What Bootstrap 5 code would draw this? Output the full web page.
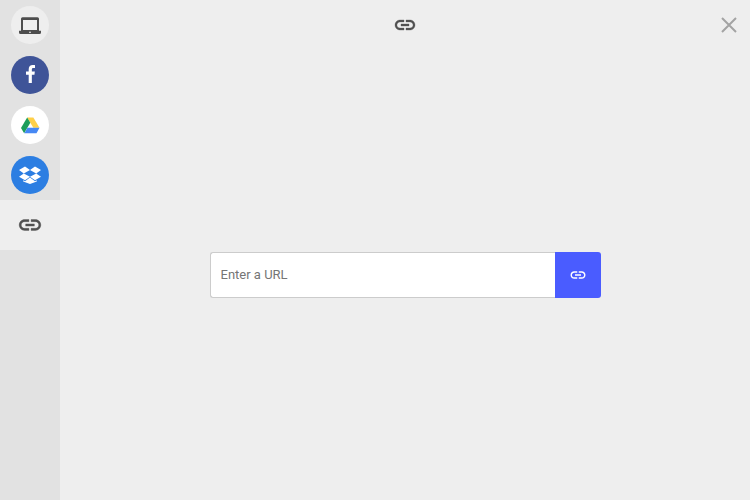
<!DOCTYPE html>
<html lang="en">
<head>
<meta charset="utf-8">
<title>Enter a URL</title>
<link href="https://cdn.jsdelivr.net/npm/bootstrap@5.3.0/dist/css/bootstrap.min.css" rel="stylesheet">
<style>
html,body{height:100%;margin:0;overflow:hidden}
body{background:#eee;font-family:Roboto,"Liberation Sans",sans-serif}
.shell{width:750px;height:500px}
.rail{width:60px;background:#e2e2e2;flex:none}
.tab{height:50px}
.tab-on{background:#eee}
.disc{width:38px;height:38px;border-radius:50%}
.disc-local{background:#eee}
.disc-fb{background:#3f5498}
.disc-drive{background:#fff}
.disc-box{background:#2c7ee2}
.main{min-width:0}
.topbar{height:50px}
.closer{right:11px;top:15px;width:20px;height:20px;padding:0;background:none;border:0}
.urlform{width:391px;height:46px}
.urlinput{height:46px;border:1px solid #ccc;border-right:0;border-radius:3px 0 0 3px;font-size:13px;padding:0 10px 2px;color:#444;box-shadow:none}
.urlinput::placeholder{color:#757575;opacity:1}
.urlbtn{width:46px;height:46px;background:#4a5cff;border:0;border-radius:0 3px 3px 0;padding:0}
.urlbtn:hover{background:#4a5cff}
.glyph-raise{margin-bottom:2px}
.glyph-nudge{margin-bottom:1px}
.link-bold{stroke:#505050;stroke-width:.35}
svg{display:block}
</style>
</head>
<body>
<div class="shell d-flex">
  <nav class="rail d-flex flex-column">
    <div class="tab d-flex align-items-center justify-content-center">
      <div class="disc disc-local d-flex align-items-center justify-content-center">
        <svg width="22" height="17" viewBox="0 0 22 17"><path fill="#4d4d4d" fill-rule="evenodd" d="M3.500.3h15A1.500 1.500 0 0 1 20 1.800V13.800h2v1.700a1.500 1.500 0 0 1-1.500 1.500h-19A1.500 1.500 0 0 1 0 15.500v-1.700h2V1.800A1.500 1.500 0 0 1 3.500.3zM4 3v10h14V3zm6 11.800v1h2v-1z"/></svg>
      </div>
    </div>
    <div class="tab d-flex align-items-center justify-content-center">
      <div class="disc disc-fb d-flex align-items-center justify-content-center">
        <svg class="glyph-raise" width="9" height="18" viewBox="0 0 10 19" preserveAspectRatio="none"><path fill="#fff" d="M6.500 19v-8.700h2.900l.4-3.400H6.500V4.800c0-1 .3-1.600 1.700-1.600H10V.2C9.700.1 8.600 0 7.400 0 4.800 0 3 1.600 3 4.500v2.400H0v3.400h3V19z"/></svg>
      </div>
    </div>
    <div class="tab d-flex align-items-center justify-content-center">
      <div class="disc disc-drive d-flex align-items-center justify-content-center">
        <svg width="19" height="17" viewBox="0 0 20 18" preserveAspectRatio="none"><polygon fill="#ffcf48" points="6.500,0.500 13,0.500 19.500,11.500 13,11.500"/><polygon fill="#1c9d5b" points="6.500,0.500 9.800,6 3.300,17.200 0,11.700"/><polygon fill="#4688f4" points="6.800,11.500 19.500,11.500 16.300,17.200 3.500,17.200"/></svg>
      </div>
    </div>
    <div class="tab d-flex align-items-center justify-content-center">
      <div class="disc disc-box d-flex align-items-center justify-content-center">
        <svg class="glyph-nudge" width="22" height="18" viewBox="0 0 22 20" preserveAspectRatio="none"><path fill="#fff" d="M6 .5 0 4.400l4.800 3.800L11 4.500zM16 .5l-5 4 6.200 3.700L22 4.400zM0 12l6 3.900 5-4-6.200-3.700zM17.200 8.200 11 11.900l5 4 6-3.900zM11 12.900l-5 4-1.800-1.200v1.400L11 20l6.800-2.900v-1.400L16 16.900z"/></svg>
      </div>
    </div>
    <div class="tab tab-on d-flex align-items-center justify-content-center">
      <svg width="26" height="26" viewBox="0 0 24 24"><path class="link-bold" fill="#505050" d="M3.900 12c0-1.710 1.390-3.100 3.100-3.100h4V7H7c-2.760 0-5 2.240-5 5s2.240 5 5 5h4v-1.900H7c-1.710 0-3.100-1.390-3.100-3.100zM8 13h8v-2H8v2zm9-6h-4v1.900h4c1.710 0 3.100 1.390 3.100 3.100s-1.390 3.100-3.100 3.100h-4V17h4c2.760 0 5-2.240 5-5s-2.240-5-5-5z"/></svg>
    </div>
  </nav>
  <main class="main flex-grow-1 position-relative d-flex flex-column">
    <div class="topbar d-flex align-items-center justify-content-center">
      <svg width="24" height="24" viewBox="0 0 24 24"><path class="link-bold" fill="#505050" d="M3.900 12c0-1.710 1.390-3.100 3.100-3.100h4V7H7c-2.760 0-5 2.240-5 5s2.240 5 5 5h4v-1.900H7c-1.710 0-3.100-1.390-3.100-3.100zM8 13h8v-2H8v2zm9-6h-4v1.900h4c1.710 0 3.100 1.390 3.100 3.100s-1.390 3.100-3.100 3.100h-4V17h4c2.760 0 5-2.240 5-5s-2.240-5-5-5z"/></svg>
    </div>
    <button class="closer position-absolute" type="button" aria-label="Close">
      <svg width="20" height="20" viewBox="0 0 20 20"><path stroke="#a3a3a3" stroke-width="2" fill="none" d="M3 3l14 14M17 3 3 17"/></svg>
    </button>
    <div class="flex-grow-1 d-flex align-items-center justify-content-center">
      <form class="urlform d-flex">
        <input class="urlinput form-control" type="text" placeholder="Enter a URL">
        <button class="urlbtn btn d-flex align-items-center justify-content-center flex-shrink-0" type="button" aria-label="Go">
          <svg width="18" height="18" viewBox="0 0 24 24"><path fill="#fff" d="M3.900 12c0-1.710 1.390-3.100 3.100-3.100h4V7H7c-2.760 0-5 2.240-5 5s2.240 5 5 5h4v-1.900H7c-1.710 0-3.100-1.390-3.100-3.100zM8 13h8v-2H8v2zm9-6h-4v1.900h4c1.710 0 3.100 1.390 3.100 3.100s-1.390 3.100-3.100 3.100h-4V17h4c2.760 0 5-2.240 5-5s-2.240-5-5-5z"/></svg>
        </button>
      </form>
    </div>
  </main>
</div>
</body>
</html>
